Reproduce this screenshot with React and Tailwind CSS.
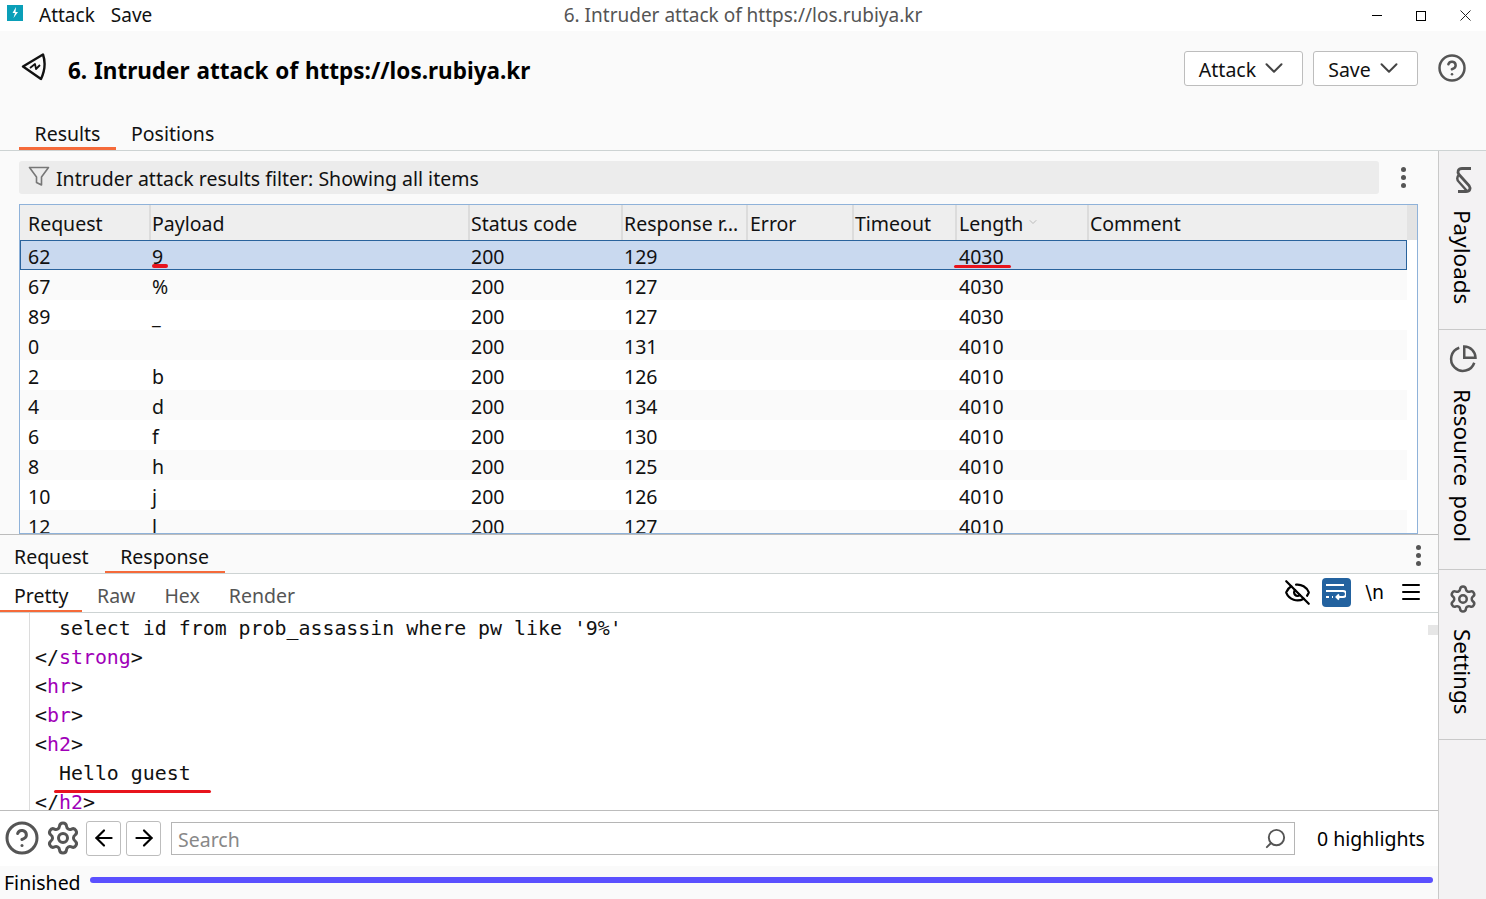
import { ArrowLeft, ArrowRight, ChevronDown, CircleHelp, EyeOff, Menu, Search, Settings } from "lucide-react";

const sans = "font-['Noto_Sans','Liberation_Sans',sans-serif]";

const rows = [
  ["67", "%", "200", "127", "4030"],
  ["89", "_", "200", "127", "4030"],
  ["0", "", "200", "131", "4010"],
  ["2", "b", "200", "126", "4010"],
  ["4", "d", "200", "134", "4010"],
  ["6", "f", "200", "130", "4010"],
  ["8", "h", "200", "125", "4010"],
  ["10", "j", "200", "126", "4010"],
  ["12", "l", "200", "127", "4010"],
];

const cols = "grid grid-cols-[130px_319px_153px_125px_106px_103px_132px_1fr]";

const Dots = () => (
  <div className="flex flex-col gap-[3px]">
    <span className="size-[5px] rounded-full bg-[#555]" />
    <span className="size-[5px] rounded-full bg-[#555]" />
    <span className="size-[5px] rounded-full bg-[#555]" />
  </div>
);

const Head = ({ children, className = "pl-px" }) => (
  <div className={`flex items-center pt-[2px] border-r-2 border-[#dcdcdc] ${className}`}>{children}</div>
);

const Code = ({ tag, close }) => (
  <div>
    {close ? "</" : "<"}
    <span className="text-[#a000b8]">{tag}</span>
    {">"}
  </div>
);

const SideTab = ({ icon, label, className }) => (
  <div className={`flex flex-col items-center border-b border-[#c9c9c9] pt-[14px] ${className}`}>
    {icon}
    <span className="[writing-mode:vertical-rl] mt-[15px] mr-[2px] text-[22.5px] leading-[28px] [word-spacing:3px] whitespace-nowrap text-black">{label}</span>
  </div>
);

export default function App() {
  return (
    <div className={`${sans} w-[1486px] h-[899px] overflow-hidden flex flex-col bg-white text-[19.5px] text-[#111]`}>
      {/* title bar */}
      <div className="h-[31px] shrink-0 flex items-center relative bg-white">
        <svg width="16" height="16" viewBox="0 0 16 16" className="ml-[7px] mb-[5px]">
          <rect width="16" height="16" fill="#0a9fb8" />
          <path d="M9 2 5.5 8H8l-1.5 5L11 7H8.5z" fill="#fff" />
        </svg>
        <span className="ml-[16px] text-[19px]">Attack</span>
        <span className="ml-[16px] text-[19px]">Save</span>
        <span className="absolute left-0 right-0 text-center text-[19px] text-[#555]">6. Intruder attack of https://los.rubiya.kr</span>
        <div className="ml-auto flex items-center">
          <span className="w-[10px] h-px bg-black mr-[34px]" />
          <span className="size-[10px] border border-black mr-[34px]" />
          <svg width="11" height="11" viewBox="0 0 11 11" className="mr-[15px]" stroke="#222">
            <path d="M.5.5l10 10M10.5.5l-10 10" />
          </svg>
        </div>
      </div>

      {/* header */}
      <div className="h-[120px] shrink-0 bg-[#fafafa] border-b border-[#cdd3d3] flex flex-col">
        <div className="h-[77px] flex items-center">
          <svg width="30" height="30" viewBox="0 0 30 30" className="ml-[19px] mb-[2px]" fill="none" stroke="#111" strokeWidth="2.4" strokeLinejoin="round">
            <path d="M4 13.500 24 1.500Q28 13 22 26z" />
            <path d="M11 15l5-4 1 5 4-4" strokeWidth="1.8" />
          </svg>
          <h1 className="ml-[19px] mt-[3px] text-[22.5px] [word-spacing:1px] font-bold text-black">6. Intruder attack of https://los.rubiya.kr</h1>
          <button className="ml-auto mb-[2px] w-[119px] h-[35px] flex items-center justify-center gap-[3px] bg-white border border-[#bdbdbd] rounded-[3px]">
            <span className="mt-[4px] -ml-[2px]">Attack</span> <ChevronDown size={30} strokeWidth={1.6} className="text-[#444] -mr-[3px]" />
          </button>
          <button className="ml-[10px] mb-[2px] w-[105px] h-[35px] flex items-center justify-center gap-[3px] bg-white border border-[#bdbdbd] rounded-[3px]">
            <span className="mt-[4px] -ml-[2px]">Save</span> <ChevronDown size={30} strokeWidth={1.6} className="text-[#444] -mr-[3px]" />
          </button>
          <CircleHelp size={30} strokeWidth={2} className="ml-[19px] mr-[19px] mb-[2px] text-[#555]" />
        </div>
        <div className="flex-1 flex items-end pl-[19px] leading-[25px]">
          <div className="h-[43px] w-[97px] flex items-end justify-center border-b-[3px] border-[#f56a3a] pb-[1px]">Results</div>
          <div className="h-[43px] ml-[15px] flex items-end pb-[4px]">Positions</div>
        </div>
      </div>

      <div className="flex-1 flex min-h-0">
        <div className="w-[1438px] shrink-0 flex flex-col min-w-0">
          {/* results */}
          <div className="h-[383px] shrink-0 bg-[#fafafa] flex flex-col px-[19px] pt-[10px]">
            <div className="flex items-center h-[33px] shrink-0">
              <div className="w-[1360px] h-[33px] flex items-center bg-[#ececec] rounded-[3px] pl-[9px]">
                <svg width="22" height="22" viewBox="0 0 22 22" fill="none" stroke="#777" strokeWidth="1.6" strokeLinejoin="round" className="mb-[3px]">
                  <path d="M1.500 2.500h19L13.500 12v8l-5-2.500V12z" />
                </svg>
                <span className="ml-[6px] mt-[2px]">Intruder attack results filter: Showing all items</span>
              </div>
              <div className="ml-[22px]"><Dots /></div>
            </div>
            <div className="mt-[10px] w-[1399px] h-[330px] overflow-hidden border border-[#8fb2d9] bg-white flex flex-col">
              <div className="h-[35px] shrink-0 flex bg-[#eeeeee]">
                <div className={`${cols} w-[1387px] pl-px`}>
                  <Head className="pl-[7px]">Request</Head>
                  <Head>Payload</Head>
                  <Head>Status code</Head>
                  <Head>Response r…</Head>
                  <Head className="pl-[2px]">Error</Head>
                  <Head>Timeout</Head>
                  <Head className="pl-[2px]">
                    Length
                    <ChevronDown size={12} className="ml-[4px] mb-[4px] text-[#bbb]" />
                  </Head>
                  <div className="flex items-center pl-px pt-[2px]">Comment</div>
                </div>
                <div className="flex-1 bg-[#e3e3e3]" />
              </div>
              <div className="w-[1387px]">
                <div className={`${cols} h-[30px] items-center bg-[#c9d9ef] border border-[#2a639c] pt-px relative`}>
                  <div className="pl-[7px]">62</div>
                  <div className="pl-px">9</div>
                  <div className="pl-px">200</div>
                  <div className="pl-px">129</div>
                  <div />
                  <div />
                  <div className="pl-[2px]">4030</div>
                  <span className="absolute left-[131px] top-[23px] w-[16px] h-[4px] rounded-full bg-[#e8141c]" />
                  <span className="absolute left-[933px] top-[24px] w-[57px] h-[3px] rounded-full bg-[#e8141c]" />
                </div>
                {rows.map((r, i) => (
                  <div key={r[0]} className={`${cols} h-[30px] items-center pl-px pt-[2px] ${i % 2 === 0 ? "bg-[#fafafa]" : "bg-white"}`}>
                    <div className="pl-[7px]">{r[0]}</div>
                    <div className="pl-px">{r[1]}</div>
                    <div className="pl-px">{r[2]}</div>
                    <div className="pl-px">{r[3]}</div>
                    <div />
                    <div />
                    <div className="pl-[2px]">{r[4]}</div>
                  </div>
                ))}
              </div>
            </div>
          </div>

          {/* request / response tabs */}
          <div className="h-[40px] shrink-0 bg-[#fafafa] border-t border-[#bcbcbc] border-b border-b-[#cdd3d3] flex items-end relative">
            <div className="h-[34px] ml-[14px] flex items-center pt-[1px]">Request</div>
            <div className="h-[34px] ml-[16px] w-[120px] flex items-center justify-center border-b-[2px] border-[#f56a3a] pt-[3px]">Response</div>
            <div className="absolute right-[17px] top-[10px]"><Dots /></div>
          </div>

          {/* view tabs */}
          <div className="h-[39px] shrink-0 flex items-end border-b border-[#cdd3d3] bg-white">
            <div className="h-[37px] w-[82px] pl-[14px] flex items-center border-b-[2px] border-[#f56a3a] pt-[6px]">Pretty</div>
            <div className="h-[37px] ml-[15px] flex items-center text-[#555] pt-[4px]">Raw</div>
            <div className="h-[37px] ml-[29px] flex items-center text-[#555] pt-[4px]">Hex</div>
            <div className="h-[37px] ml-[29px] flex items-center text-[#555] pt-[4px]">Render</div>
            <div className="ml-auto mr-[15px] h-[37px] flex items-center pb-[3px]">
              <EyeOff size={27} strokeWidth={2} className="text-black" />
              <div className="ml-[11px] size-[29px] rounded-[4px] bg-[#23629f] flex items-center justify-center">
                <svg width="20" height="18" viewBox="0 0 20 18" fill="none" stroke="#fff" strokeWidth="2">
                  <path d="M0 2h18M0 8h17a2.500 2.500 0 0 1 0 6h-6M0 14h3M6 14h1M13 11.500 10.500 14l2.500 2.500" />
                </svg>
              </div>
              <span className="ml-[15px] font-['DejaVu_Sans',sans-serif] text-[19px] text-black">\n</span>
              <Menu size={24} strokeWidth={2} className="ml-[15px] text-black" />
            </div>
          </div>

          {/* code */}
          <div className="h-[197px] shrink-0 bg-white relative overflow-hidden flex">
            <div className="w-[30px] shrink-0 border-r border-[#dcdcdc]" />
            <div className="pl-[5px] pt-px font-['DejaVu_Sans_Mono','Liberation_Mono',monospace] text-[19.9px] leading-[29px] whitespace-pre text-[#111]">
              <div>{"  select id from prob_assassin where pw like '9%'"}</div>
              <Code tag="strong" close />
              <Code tag="hr" />
              <Code tag="br" />
              <Code tag="h2" />
              <div>{"  Hello guest"}</div>
              <Code tag="h2" close />
            </div>
            <span className="absolute left-[54px] top-[177px] w-[157px] h-[3px] rounded-full bg-[#e8141c]" />
            <span className="absolute right-0 top-[12px] w-[10px] h-[10px] bg-[#e6e6e6]" />
          </div>

          {/* search */}
          <div className="h-[56px] shrink-0 bg-white border-t border-[#bcbcbc] flex items-center pb-[1px]">
            <CircleHelp size={36} strokeWidth={2} className="ml-[4px] text-[#555]" />
            <Settings size={36} strokeWidth={2} className="ml-[5px] text-[#555]" />
            <div className="ml-[5px] size-[35px] flex items-center justify-center border border-[#bdbdbd] rounded-[3px]">
              <ArrowLeft size={26} strokeWidth={2} className="text-black" />
            </div>
            <div className="ml-[5px] size-[35px] flex items-center justify-center border border-[#bdbdbd] rounded-[3px]">
              <ArrowRight size={26} strokeWidth={2} className="text-black" />
            </div>
            <div className="ml-[10px] w-[1124px] h-[33px] flex items-center justify-between border border-[#b5b5b5] pl-[6px] pr-[7px] text-[#888]">
              <span className="mt-[3px]">Search</span>
              <Search size={23} strokeWidth={2} className="text-[#555] -scale-x-100" />
            </div>
            <span className="ml-[22px] mt-[2px] text-black">0 highlights</span>
          </div>

          {/* status */}
          <div className="flex-1 bg-[#fafafa] flex items-start pl-[4px] text-black">
            <span className="leading-[33px]">Finished</span>
            <div className="ml-[9px] mt-[11px] w-[1343px] h-[6px] rounded-full bg-[#5b50ff]" />
          </div>
        </div>

        {/* right side tabs */}
        <div className="flex-1 border-l border-[#c9c9c9] bg-[#f3f2f3]">
          <SideTab
            className="h-[179px]"
            label="Payloads"
            icon={
              <svg width="18" height="28" viewBox="0 0 18 28" fill="none" stroke="#555" strokeWidth="2.800" className="mt-px mb-px ml-[2px]">
                <path d="M16 2.500H7C3 2.500 2 6 4 8.500l10 11c2 3 1 6-3 6H3" />
                <path d="M4 8.500C1 12 2 14 4 16l8 9" strokeWidth="2.400" />
              </svg>
            }
          />
          <SideTab
            className="h-[240px]"
            label="Resource pool"
            icon={
              <svg width="30" height="30" viewBox="0 0 24 24" fill="none" stroke="#555" strokeWidth="2">
                <path d="M21 15A9.500 9.500 0 1 1 9 3" />
                <path d="M13 2a9 9 0 0 1 9 9h-9z" />
              </svg>
            }
          />
          <SideTab className="h-[170px]" label="Settings" icon={<Settings size={30} strokeWidth={2} className="text-[#555]" />} />
        </div>
      </div>
    </div>
  );
}
